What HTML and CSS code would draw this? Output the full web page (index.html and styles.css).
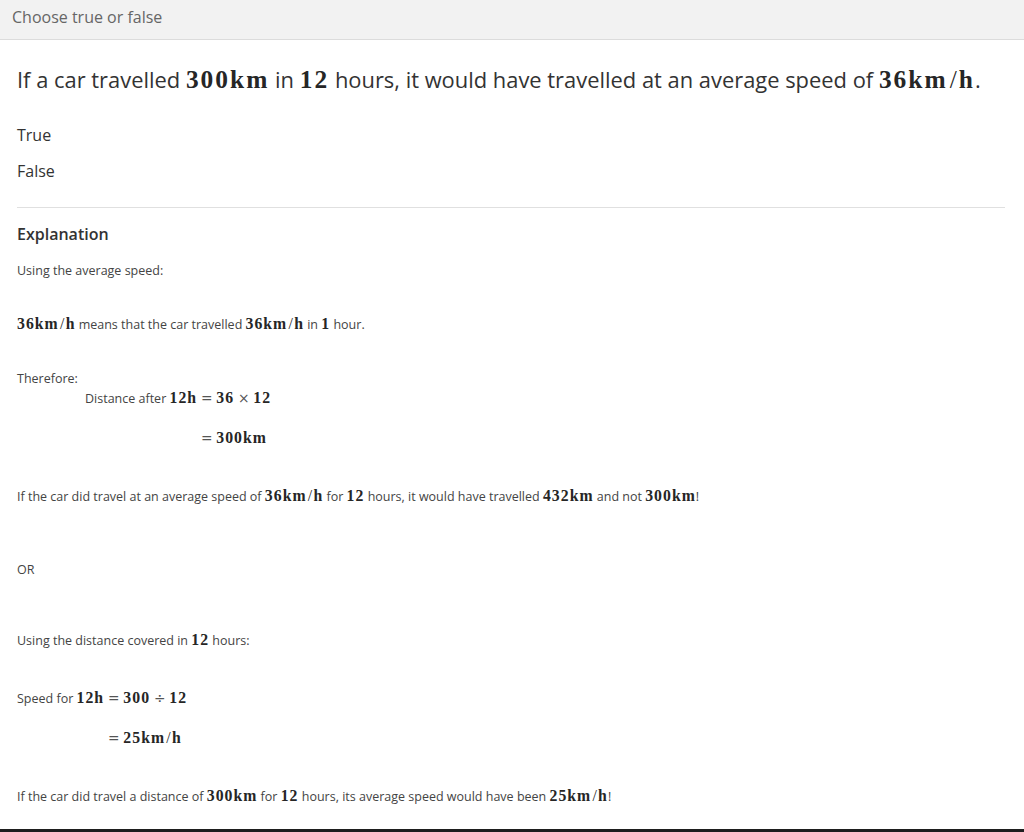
FILE: index.html
```html
<!DOCTYPE html>
<html lang="en">
<head>
<meta charset="utf-8">
<title>Choose true or false</title>
<link rel="stylesheet" href="styles.css">
</head>
<body>
<div class="page">
  <header class="bar">Choose true or false</header>
  <main class="content">
    <h1 class="question">If a car travelled <span class="m">300km</span> in <span class="m">12</span> hours, it would have travelled at an average speed of <span class="m">36km<span class="sl">/</span>h</span>.</h1>
    <div class="options">
      <div class="option">True</div>
      <div class="option">False</div>
    </div>
    <hr class="rule">
    <section class="explain">
      <h2 class="ex-title">Explanation</h2>
      <p class="line g1">Using the average speed:</p>
      <p class="line g3"><span class="m">36km<span class="sl">/</span>h</span> means that the car travelled <span class="m">36km<span class="sl">/</span>h</span> in <span class="m">1</span> hour.</p>
      <p class="line g3">Therefore:</p>
      <div class="align a1">
        <div class="lhs">Distance after <span class="m">12h</span></div>
        <div class="rhs"><span class="op">=</span><span class="m">36</span><span class="op">×</span><span class="m">12</span></div>
        <div class="lhs"></div>
        <div class="rhs r2"><span class="op">=</span><span class="m">300km</span></div>
      </div>
      <p class="line g2">If the car did travel at an average speed of <span class="m">36km<span class="sl">/</span>h</span> for <span class="m">12</span> hours, it would have travelled <span class="m">432km</span> and not <span class="m">300km</span>!</p>
      <p class="line g4">OR</p>
      <p class="line g4b">Using the distance covered in <span class="m">12</span> hours:</p>
      <div class="align a2">
        <div class="lhs">Speed for <span class="m">12h</span></div>
        <div class="rhs"><span class="op">=</span><span class="m">300</span><span class="op">÷</span><span class="m">12</span></div>
        <div class="lhs"></div>
        <div class="rhs r2"><span class="op">=</span><span class="m">25km<span class="sl">/</span>h</span></div>
      </div>
      <p class="line g2">If the car did travel a distance of <span class="m">300km</span> for <span class="m">12</span> hours, its average speed would have been <span class="m">25km<span class="sl">/</span>h</span>!</p>
    </section>
  </main>
</div>
</body>
</html>
```

FILE: styles.css
```css
html, body {
  margin: 0;
  padding: 0;
  background: #ffffff;
}
body {
  font-family: "Open Sans", "Noto Sans", sans-serif;
  color: #333333;
}
.page {
  height: 832px;
  box-sizing: border-box;
  border-bottom: 3px solid #1e1e1e;
  overflow: hidden;
}
.bar {
  height: 39px;
  border-bottom: 1px solid #dcdcdc;
  background: #f2f2f2;
  color: #666666;
  font-size: 16px;
  line-height: 34px;
  padding-left: 12px;
}
.content {
  padding: 0 19px 0 17px;
}
.m {
  font-family: "Liberation Serif", "DejaVu Serif", serif;
  font-weight: bold;
  letter-spacing: 0.08em;
  color: #262626;
  font-size: 1.16em;
  line-height: 1;
}
.line .m,
.align .m {
  font-size: 1.26em;
  letter-spacing: 0.065em;
}
.m .sl {
  font-weight: normal;
  letter-spacing: 0;
  padding: 0 0.08em;
}
.op {
  font-family: "DejaVu Sans", sans-serif;
  font-weight: normal;
  font-size: 1.1em;
  line-height: 1;
  color: #555555;
  padding: 0 0.28em;
}
.question {
  margin: 25px 0 0;
  font-size: 21.9px;
  font-weight: normal;
  line-height: 30px;
}
.options {
  margin-top: 22px;
}
.option {
  font-size: 16px;
  line-height: 24px;
  padding: 6px 0;
}
.rule {
  margin: 18px 0 0;
  border: 0;
  border-top: 1px solid #e0e0e0;
  height: 0;
}
.ex-title {
  margin: 15px 0 0;
  font-size: 16px;
  font-weight: 600;
  line-height: 22px;
  color: #333333;
}
.line {
  margin: 0;
  font-size: 12.5px;
  line-height: 20px;
  color: #444444;
}
.g1 { margin-top: 16px; }
.g2 { margin-top: 38px; }
.g3 { margin-top: 34px; }
.g4 { margin-top: 53px; }
.g4b { margin-top: 51px; }
.align {
  display: grid;
  grid-template-columns: auto auto;
  justify-content: start;
  font-size: 12.5px;
  line-height: 20px;
  color: #444444;
}
.align .lhs {
  text-align: right;
}
.align .r2 {
  margin-top: 20px;
}
.a1 {
  margin-left: 68px;
}
.a2 {
  margin-top: 38px;
}
```
